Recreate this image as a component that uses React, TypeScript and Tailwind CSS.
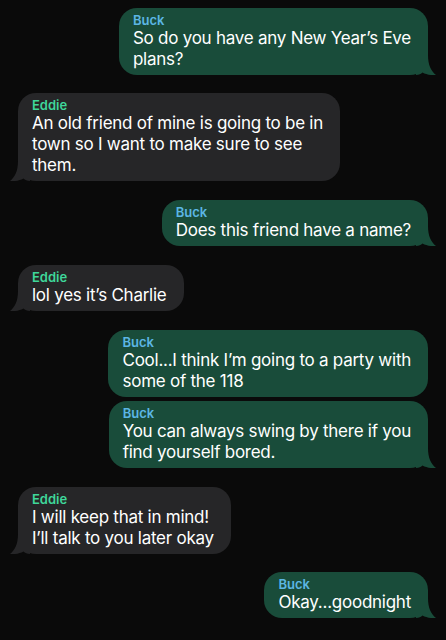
import React from "react";

type Msg = {
  from: "Buck" | "Eddie";
  lines: string[];
  tail: boolean;
  gap: string;
};

const messages: Msg[] = [
  { from: "Buck", lines: ["So do you have any New Year\u2019s Eve", "plans?"], tail: true, gap: "mt-0" },
  { from: "Eddie", lines: ["An old friend of mine is going to be in", "town so I want to make sure to see", "them."], tail: true, gap: "mt-[18px]" },
  { from: "Buck", lines: ["Does this friend have a name?"], tail: true, gap: "mt-[19px]" },
  { from: "Eddie", lines: ["lol yes it\u2019s Charlie"], tail: true, gap: "mt-[19px]" },
  { from: "Buck", lines: ["Cool...I think I\u2019m going to a party with", "some of the 118"], tail: false, gap: "mt-[19px]" },
  { from: "Buck", lines: ["You can always swing by there if you", "find yourself bored."], tail: true, gap: "mt-[4px]" },
  { from: "Eddie", lines: ["I will keep that in mind!", "I\u2019ll talk to you later okay"], tail: true, gap: "mt-[19px]" },
  { from: "Buck", lines: ["Okay...goodnight"], tail: true, gap: "mt-[18px]" },
];

function Tail({ side, color }: { side: "left" | "right"; color: string }) {
  if (side === "right") {
    return (
      <svg className="absolute bottom-0 right-[-8px]" width="20" height="20" viewBox="0 0 20 20">
        <path d="M0 0 H12 C12 10 15 16 20 20 C15 20.5 10 19.5 6.5 17.5 C5 19 3 20 0 20 Z" fill={color} />
      </svg>
    );
  }
  return (
    <svg className="absolute bottom-0 left-[-8px]" width="20" height="20" viewBox="0 0 20 20">
      <path d="M20 0 H8 C8 10 5 16 0 20 C5 20.5 10 19.5 13.5 17.5 C15 19 17 20 20 20 Z" fill={color} />
    </svg>
  );
}

function Bubble({ msg }: { msg: Msg }) {
  const mine = msg.from === "Buck";
  const color = mine ? "#194c3a" : "#262628";
  return (
    <div className={`flex ${mine ? "justify-end" : "justify-start"} ${msg.gap}`}>
      <div
        className={`relative rounded-[18px] pl-[14px] pr-[17px] pt-[5px] pb-[5px] ${
          mine ? "bg-[#194c3a]" : "bg-[#262628]"
        }`}
      >
        {msg.tail && <Tail side={mine ? "right" : "left"} color={color} />}
        <div className="relative">
          <div
            className={`text-[13px] leading-[15px] font-semibold ${
              mine ? "text-[#5cb6e4]" : "text-[#3fd79a]"
            }`}
          >
            {msg.from}
          </div>
          <div className="text-[17px] leading-[21px] text-white whitespace-nowrap tracking-[-0.25px]">
            {msg.lines.map((l, i) => (
              <div key={i}>{l}</div>
            ))}
          </div>
        </div>
      </div>
    </div>
  );
}

export default function App() {
  return (
    <div
      className="w-[446px] h-[640px] bg-[#0a0a0a] px-[18px] pt-[8px] overflow-hidden"
      style={{ fontFamily: "Inter, 'Noto Sans', sans-serif" }}
    >
      {messages.map((m, i) => (
        <Bubble key={i} msg={m} />
      ))}
    </div>
  );
}
